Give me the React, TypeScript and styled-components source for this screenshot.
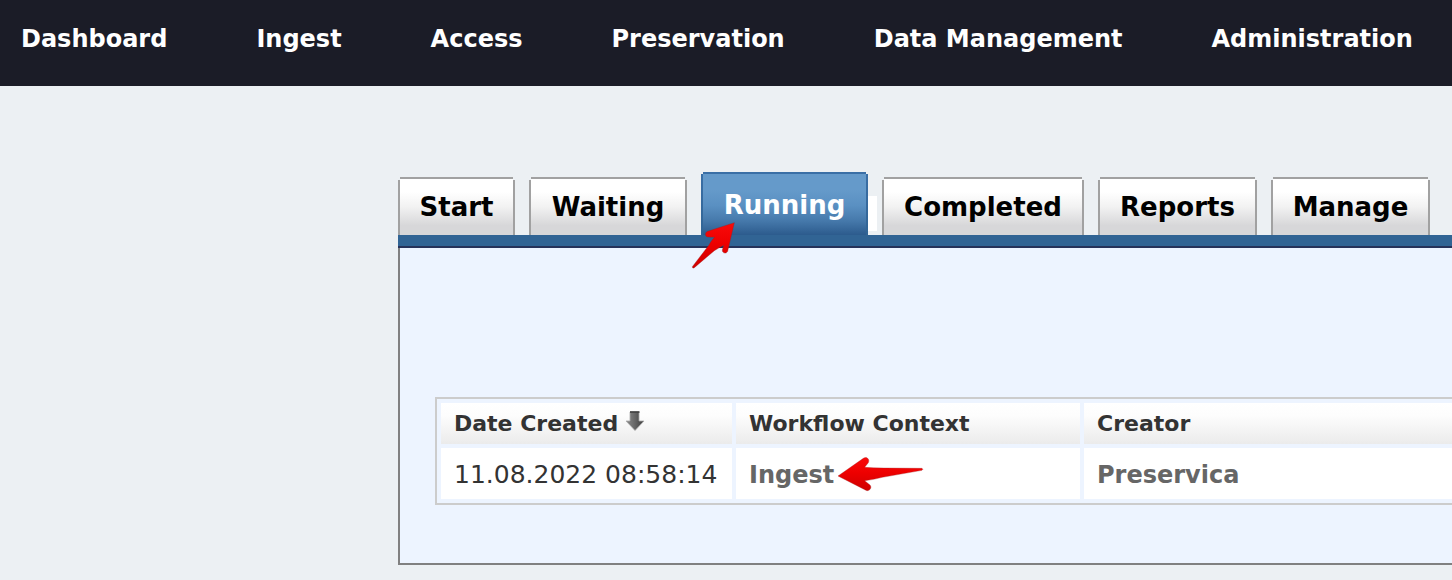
import React from "react";
import styled, { createGlobalStyle, css } from "styled-components";

const GlobalStyle = createGlobalStyle`
  *, *::before, *::after { box-sizing: border-box; }
  body {
    margin: 0;
    overflow-x: hidden;
    background: #ecf0f3;
    color: #333;
    font-family: "DejaVu Sans", Verdana, sans-serif;
  }
`;

const TopBar = styled.header`
  background: #1b1c27;
  height: 86px;
  padding: 23px 21px 0;
  overflow: hidden;
`;

const TopNav = styled.nav`
  display: flex;
  gap: 89px;
`;

const TopLink = styled.a`
  color: #fff;
  font-size: 24px;
  font-weight: bold;
  line-height: 32px;
  text-decoration: none;
  white-space: nowrap;
`;

const Main = styled.main`
  margin: 86px 0 16px 398px;
`;

const TabRow = styled.nav`
  display: flex;
  align-items: flex-end;
  gap: 14px;
`;

const activeTab = css`
  height: 63px;
  color: #fff;
  line-height: 66px;
  background:
    linear-gradient(#3a6fa6, #3a6fa6) 2px 0 / calc(100% - 4px) 2px no-repeat,
    linear-gradient(#3a6fa6, #316494) 0 2px / 2px 100% no-repeat,
    linear-gradient(#3a6fa6, #316494) 100% 2px / 2px 100% no-repeat,
    linear-gradient(#659aca 0%, #659aca 25%, #5a90c2 50%, #4578aa 75%, #2d5c8e 96%, #2d5c8e 100%) 2px 2px / calc(100% - 4px) 100% no-repeat;

  &::after {
    content: "";
    position: absolute;
    left: 100%;
    top: 24px;
    width: 9px;
    height: 35px;
    background: #fff;
  }
`;

const idleTab = css`
  height: 58px;
  color: #000;
  line-height: 60px;
  background:
    linear-gradient(#a1a1a1, #a1a1a1) 2px 0 / calc(100% - 4px) 2px no-repeat,
    linear-gradient(#a1a1a1, #a1a1a1) 0 3px / 2px 100% no-repeat,
    linear-gradient(#a1a1a1, #a1a1a1) 100% 3px / 2px 100% no-repeat,
    linear-gradient(#fff 0%, #fff 22%, #f2f2f2 48%, #d7d7d9 80%, #d7d7d9 100%) 2px 2px / calc(100% - 4px) 100% no-repeat;
`;

const Tab = styled.a<{ $width: number; $active?: boolean }>`
  position: relative;
  flex: none;
  width: ${(p) => p.$width}px;
  font-size: 26px;
  font-weight: bold;
  text-align: center;
  text-decoration: none;
  white-space: nowrap;
  ${(p) => (p.$active ? activeTab : idleTab)}
`;

const Panel = styled.section`
  overflow: hidden;
  background:
    linear-gradient(#316494 0 11px, #26325a 11px 13px) 0 0 / 100% 13px no-repeat,
    linear-gradient(#808080, #808080) 0 13px / 2px 100% no-repeat,
    #edf4ff;
  border-bottom: 2px solid #808080;
  padding: 162px 0 58px 37px;
`;

const Table = styled.table`
  width: calc(100% + 40px);
  table-layout: fixed;
  border: 2px solid #ccc;
  border-collapse: separate;
  border-spacing: 4px;
`;

const Col = styled.col<{ $width?: number }>`
  width: ${(p) => (p.$width ? p.$width + "px" : "auto")};
`;

const HeadCell = styled.th`
  height: 41px;
  padding: 0 13px;
  background: linear-gradient(#fff, #fdfdfd 30%, #ebebeb);
  font-size: 22px;
  line-height: 32px;
  text-align: left;
  white-space: nowrap;
`;

const SortButton = styled.button`
  display: flex;
  align-items: center;
  gap: 7px;
  padding: 0;
  border: 0;
  background: none;
  color: inherit;
  font: inherit;
  cursor: pointer;
`;

const SortIcon = styled.svg`
  flex: none;
  margin-bottom: 6px;
`;

const Cell = styled.td`
  height: 51px;
  padding: 2px 13px 0;
  background: #fff;
  font-size: 25px;
  line-height: 32px;
  white-space: nowrap;
`;

const CellLink = styled.a`
  position: relative;
  color: #666;
  font-size: 24px;
  font-weight: bold;
  text-decoration: none;
`;

const TabPointer = styled.svg`
  position: absolute;
  z-index: 1;
  left: -10px;
  top: 49px;
`;

const LinkPointer = styled.svg`
  position: absolute;
  left: 100%;
  top: -6px;
  margin-left: 3px;
`;

const sections = ["Dashboard", "Ingest", "Access", "Preservation", "Data Management", "Administration"];

const tabs = [
  { label: "Start", width: 117 },
  { label: "Waiting", width: 158 },
  { label: "Running", width: 167, active: true },
  { label: "Completed", width: 202 },
  { label: "Reports", width: 159 },
  { label: "Manage", width: 159 },
];

function RedGradient({ id }: { id: string }) {
  return (
    <defs>
      <linearGradient id={id} x1="0" y1="0" x2="0" y2="1">
        <stop offset="0" stopColor="#f90a0a" />
        <stop offset="0.45" stopColor="#ee0000" />
        <stop offset="1" stopColor="#cf0000" />
      </linearGradient>
    </defs>
  );
}

export default function App() {
  return (
    <>
      <GlobalStyle />
      <TopBar>
        <TopNav aria-label="Main">
          {sections.map((name) => (
            <TopLink key={name} href="#">{name}</TopLink>
          ))}
        </TopNav>
      </TopBar>
      <Main>
        <TabRow aria-label="Workflows">
          {tabs.map((tab) => (
            <Tab key={tab.label} href="#" $width={tab.width} $active={tab.active} aria-current={tab.active ? "page" : undefined}>
              {tab.label}
              {tab.active && (
                <TabPointer width="46" height="50" viewBox="32 184 138 150" aria-hidden="true">
                  <RedGradient id="tabArrow" />
                  <path
                    d="M162 189 L82 215 C73 219 73 231 83 232 L103 233 C95 240 90 249 86 256 L36 321 Q36 328 42 324 L102 273 Q117 264 130 257 L126 271 C125 281 138 284 142 275 Z"
                    fill="url(#tabArrow)"
                    stroke="#8f2020"
                    strokeWidth="1"
                  />
                </TabPointer>
              )}
            </Tab>
          ))}
        </TabRow>
        <Panel>
          <Table>
            <colgroup>
              <Col $width={291} />
              <Col $width={344} />
              <Col />
            </colgroup>
            <thead>
              <tr>
                <HeadCell scope="col" aria-sort="descending">
                  <SortButton type="button">
                    Date Created
                    <SortIcon width="20" height="22" viewBox="0 0 20 22" aria-hidden="true">
                      <defs>
                        <linearGradient id="sortFill" x1="0" y1="0" x2="1" y2="0">
                          <stop offset="0" stopColor="#8c8c8c" />
                          <stop offset="0.5" stopColor="#666" />
                          <stop offset="1" stopColor="#3c3c3c" />
                        </linearGradient>
                      </defs>
                      <path d="M5 2H14V11H19L10 20.500L1 11H5Z" fill="url(#sortFill)" stroke="#aaa" strokeWidth="0.8" />
                      <path d="M5 2H14.500" stroke="#333" strokeWidth="1.500" />
                    </SortIcon>
                  </SortButton>
                </HeadCell>
                <HeadCell scope="col">Workflow Context</HeadCell>
                <HeadCell scope="col">Creator</HeadCell>
              </tr>
            </thead>
            <tbody>
              <tr>
                <Cell>11.08.2022 08:58:14</Cell>
                <Cell>
                  <CellLink href="#">
                    Ingest
                    <LinkPointer width="88" height="38" viewBox="322 209 264 114" aria-hidden="true">
                      <RedGradient id="linkArrow" />
                      <path
                        d="M325 272 L401 219 C411 212 421 222 416 232 L405 246 Q430 248 462 248 L577 249 Q582 252 577 255 L458 276 Q428 284 405 286 L421 299 C429 308 417 321 407 314 Z"
                        fill="url(#linkArrow)"
                        stroke="#a02020"
                        strokeWidth="1"
                      />
                    </LinkPointer>
                  </CellLink>
                </Cell>
                <Cell>
                  <CellLink href="#">Preservica</CellLink>
                </Cell>
              </tr>
            </tbody>
          </Table>
        </Panel>
      </Main>
    </>
  );
}
